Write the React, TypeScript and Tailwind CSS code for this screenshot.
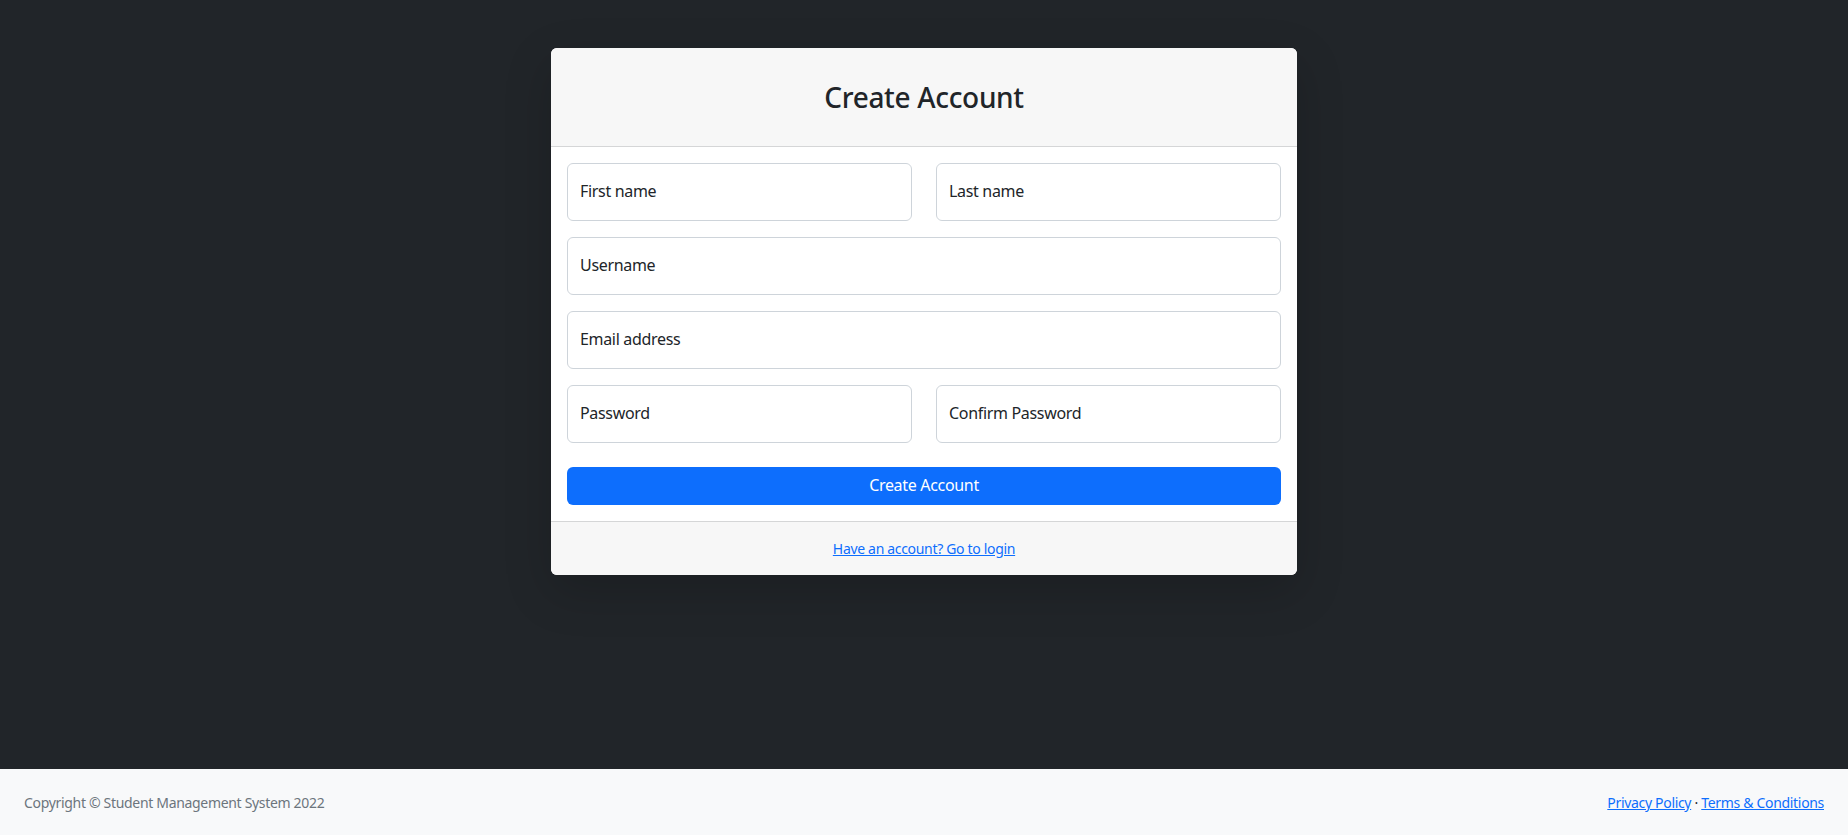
import React from 'react'

type FieldProps = {
  id: string
  label: string
  type?: string
}

const Field: React.FC<FieldProps> = ({ id, label, type = 'text' }) => (
  <div className="relative">
    <input
      id={id}
      type={type}
      className="peer block h-[58px] w-full rounded-md border border-[#ced4da] bg-white px-3 text-base text-[#212529] outline-none"
    />
    <label
      htmlFor={id}
      className="pointer-events-none absolute inset-y-0 left-[13px] flex items-center pb-[2px] text-base text-[#212529]"
    >
      {label}
    </label>
  </div>
)

export default function App() {
  return (
    <div
      className="flex min-h-[835px] flex-col bg-[#212529] tracking-[-0.02em]"
      style={{ fontFamily: '"Noto Sans", "Open Sans", sans-serif' }}
    >
      <main className="flex justify-center">
        <div className="mt-12 w-[746px] overflow-hidden rounded-md bg-white shadow-[0_16px_48px_rgba(0,0,0,0.175)]">
          <div className="border-b border-[#d5d6d7] bg-[#f7f7f7] py-8">
            <h3 className="text-center text-[28px] leading-[34px] font-medium text-[#212529]">
              Create Account
            </h3>
          </div>
          <form className="flex flex-col gap-4 p-4" onSubmit={(e) => e.preventDefault()}>
            <div className="grid grid-cols-2 gap-6">
              <Field id="firstName" label="First name" />
              <Field id="lastName" label="Last name" />
            </div>
            <Field id="username" label="Username" />
            <Field id="email" label="Email address" type="email" />
            <div className="grid grid-cols-2 gap-6">
              <Field id="password" label="Password" type="password" />
              <Field id="confirm" label="Confirm Password" type="password" />
            </div>
            <button
              type="submit"
              className="mt-2 h-[38px] w-full rounded-md bg-[#0d6efd] pb-[2px] text-base text-white"
            >
              Create Account
            </button>
          </form>
          <div className="border-t border-[#d5d6d7] bg-[#f7f7f7] py-4 text-center text-sm leading-[21px]">
            <a href="#" className="text-[#0d6efd] underline">
              Have an account? Go to login
            </a>
          </div>
        </div>
      </main>
      <footer className="mt-auto flex h-[66px] items-center justify-between bg-[#f8f9fa] px-6 text-sm leading-[21px]">
        <div className="text-[#6c757d]">Copyright © Student Management System 2022</div>
        <div className="text-[#212529]">
          <a href="#" className="text-[#0d6efd] underline">
            Privacy Policy
          </a>
          {' · '}
          <a href="#" className="text-[#0d6efd] underline">
            Terms &amp; Conditions
          </a>
        </div>
      </footer>
    </div>
  )
}
